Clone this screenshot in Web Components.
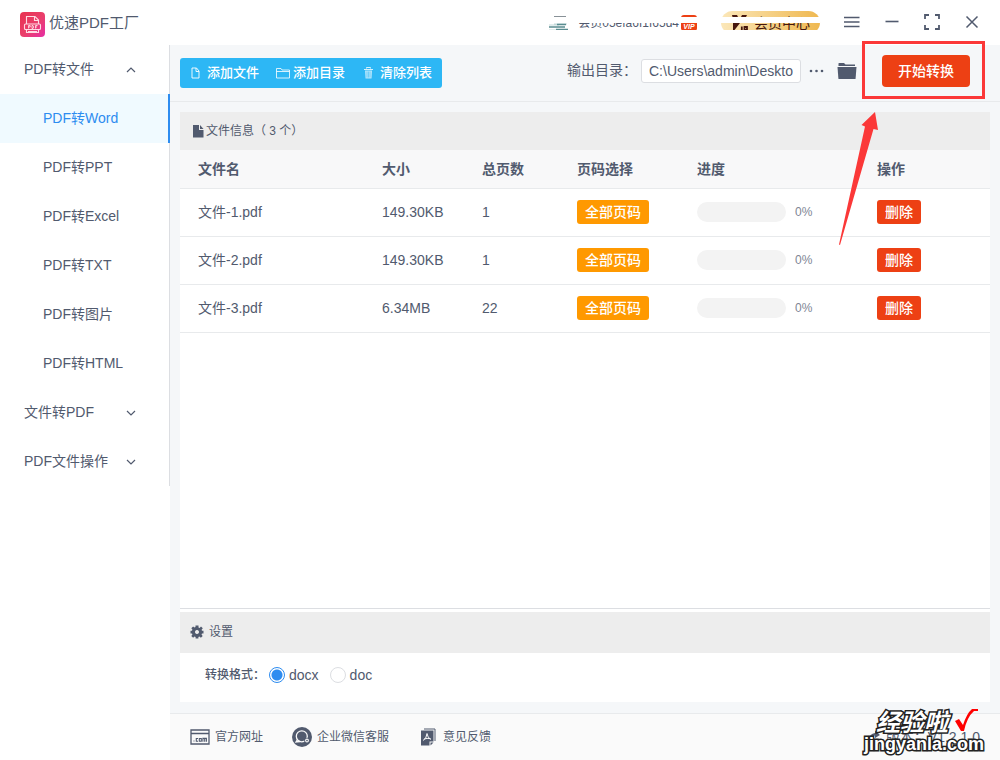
<!DOCTYPE html>
<html lang="zh-CN">
<head>
<meta charset="utf-8">
<title>优速PDF工厂</title>
<style>
  body {
    margin: 0;
    font: 14px/20px "Liberation Sans", "Noto Sans CJK SC", sans-serif;
    color: #515a6e;
    background: #fff;
    --line: #e8eaec;
    --blue: #2d8cf0;
    --red: #ed4014;
    --canvas: #f5f7f9;
  }
</style>
</head>
<body>
<pdf-app></pdf-app>

<script>
const define = (name, html, setup) => {
  const template = document.createElement('template');
  template.innerHTML = `<style>
    *, *::before, *::after { box-sizing: border-box; }
    :host { display: block; box-sizing: border-box; }
    button, input { font: inherit; color: inherit; margin: 0; }
    button { border: 0; background: none; padding: 0; cursor: pointer; white-space: nowrap; }
    a { color: inherit; text-decoration: none; }
  </style>` + html;
  customElements.define(name, class extends HTMLElement {
    constructor() {
      super();
      this.attachShadow({ mode: 'open' }).append(template.content.cloneNode(true));
    }
    connectedCallback() { if (setup) setup(this, this.shadowRoot); }
  });
};

const ICONS = {
  logo: ['0 0 25 25', `<defs><linearGradient id="g" x1="0" y1="0" x2="1" y2="1"><stop offset="0" stop-color="#e8324f"/><stop offset=".55" stop-color="#ea3f6c"/><stop offset="1" stop-color="#e62ea6"/></linearGradient></defs>
    <rect width="25" height="25" rx="4" fill="url(#g)"/>
    <g fill="none" stroke="#ffdbe4" stroke-width="1.1"><path d="M6.500 12V4.500H15l3.500 3.500v4M14.500 4.500V8.500h4"/><rect x="4.500" y="12" width="16" height="5.500" rx="1"/><path d="M6.500 17.500v3h12v-3M8 19.500h9"/>
    <path stroke-width=".9" d="M8.500 16.500v-3h1.700v1.500H8.500M12 13.500v3h1q1.200-1.500 0-3zM15.500 16.500v-3h2M15.500 15h1.500"/></g>`],
  menu: ['0 0 16 12', '<path d="M0 1.500h15.500M0 6h15.500M0 10.500h15.500" fill="none" stroke="currentColor" stroke-width="1.400"/>'],
  minimize: ['0 0 14 14', '<path d="M.5 6.500h13" stroke="currentColor" stroke-width="1.600"/>'],
  expand: ['0 0 16 16', '<path d="M1 5V1h4M11 1h4v4M15 11v4h-4M5 15H1v-4" fill="none" stroke="currentColor" stroke-width="1.800"/>'],
  close: ['0 0 14 14', '<path d="M1.500 1.500l11 11M12.500 1.500l-11 11" stroke="currentColor" stroke-width="1.500"/>'],
  up: ['0 0 10 10', '<path d="M1 7l4-4 4 4" fill="none" stroke="currentColor" stroke-width="1.200"/>'],
  down: ['0 0 10 10', '<path d="M1 3l4 4 4-4" fill="none" stroke="currentColor" stroke-width="1.200"/>'],
  page: ['0 0 12 14', '<path d="M2.500 2h4.500l2.500 3v7h-7zM6.500 2v3.500h3" fill="none" stroke="currentColor" opacity=".9"/>'],
  dir: ['0 0 14 14', '<path d="M.5 12V2.500h4.500l1 1.500h7.500v8zM.5 5.500h13" fill="none" stroke="currentColor" opacity=".8"/>'],
  trash: ['0 0 12 14', '<path d="M4 2.500V1.500h4v1M1.500 3.500h9" fill="none" stroke="currentColor" opacity=".8"/><path d="M2.500 4.500h7l-.5 8h-6z" fill="currentColor" opacity=".65"/><path d="M4.500 5.500v6M6 5.500v6M7.500 5.500v6" stroke="#2db7f5" stroke-width=".5"/>'],
  file: ['0 0 12 14', '<path d="M1 1h6v5h4.500v7.500H1z" fill="currentColor"/><path d="M8 1l3.500 4H8z" fill="currentColor"/>'],
  more: ['0 0 16 4', '<circle cx="2" cy="2" r="1.300"/><circle cx="7.500" cy="2" r="1.300"/><circle cx="13" cy="2" r="1.300"/>'],
  folder: ['0 0 20 18', '<path d="M1.500 1.500Q1.500 1 2 1h5l1.500 1.500H18V4H1.500z"/><path d="M.5 5h19l-.9 11.500q-.1.500-.6.500H2q-.5 0-.6-.5z"/>'],
  gear: ['0 0 14 14', '<path fill-rule="evenodd" d="M5.500.5h3v1.900l1.100.5L11 1.500 12.800 3.300l-1.200 1.500.4 1h1.500v2.600H12l-.5 1.100 1.200 1.400-1.800 1.800-1.500-1.100-1 .4v1.500H5.600V12l-1.100-.4-1.400 1.100-1.800-1.800 1.100-1.500L2 8.400H.5V5.700H2l.4-1.100-1.100-1.400L3.100 1.400l1.400 1.100 1-.4zM7 5a2 2 0 1 0 .01 0z"/>'],
  site: ['0 0 20 16', '<path d="M1 1h18v14H1zM1 4.500h18" fill="none" stroke="currentColor" stroke-width="1.300"/><g fill="none" stroke="currentColor" stroke-width="1.100"><path d="M3.500 12h1M8 9.500H6.300v2.700H8M9.300 9.500h2v2.700h-2zM12.900 12.700V9.400h3.500v3.300M14.700 9.500v3.200"/></g>'],
  wechat: ['0 0 20 20', '<circle cx="10" cy="10" r="10"/><g fill="none" stroke="#fafafa" stroke-width="1.300"><circle cx="9.800" cy="9.300" r="5.500"/><path d="M5.500 12.500L4 15l4-.5"/></g><circle cx="15" cy="13.500" r="2.800"/><circle cx="15" cy="13.500" r="1.400" fill="none" stroke="#fafafa" stroke-width="1.100"/>'],
  feedback: ['0 0 16 18', '<path d="M4 1h11v12" fill="none" stroke="currentColor"/><path d="M1 2.500h12.500v11H9.500V17.500H1z"/><path d="M10.500 14.500h3l-3 3z"/><path d="M7 5.500Q7.500 10 11 11.500M7 5.500Q6.500 11 3 12.500M4 11q3-1 6.500-.3" fill="none" stroke="#fafafa" stroke-width="1"/>'],
  version: ['0 0 16 16', '<path d="M3 10q.5-5 6-6V1.500L14 6 9 9V6.500Q5 7 3 10z"/>'],
  avatar: ['0 0 20 18', '<path d="M6 10h13M1 11h10M1 16h10" stroke="#c3d9da" stroke-width="1.200"/><path d="M9 10.500h9M1 13h16M8 15.500h12" stroke="#5a8c90" stroke-width="1.500"/><path d="M6 3h12" fill="none" stroke="#3a4853" stroke-width="1.200"/>'],
  vip: ['0 0 18 18', '<path d="M1 1h5l2 4H2zM11 1h5l-2 4H9zM2 9h7l-7 9z"/><path d="M10.800 19v-6.500M13.500 19v-6h2.500v3h-2.500" fill="none" stroke="currentColor" stroke-width="1.800"/>']
};

define('app-icon', `
  <style>
    :host { display: inline-block; flex: none; width: 14px; height: 14px; }
    svg { display: block; width: 100%; height: 100%; fill: currentColor; }
  </style>
  <svg aria-hidden="true"></svg>`, (host, root) => {
  const [box, shape] = ICONS[host.getAttribute('name')];
  const svg = root.querySelector('svg');
  svg.setAttribute('viewBox', box);
  svg.innerHTML = shape;
});

define('member-bar', `
  <style>
    :host { position: relative; display: flex; align-items: center; height: 45px; }
    .avatar { width: 20px; height: 18px; margin-right: 10px; }
    .name { font-size: 12px; margin-right: 2px; }
    .tag { display: flex; align-items: flex-end; justify-content: center; width: 16px; height: 16px; border-radius: 3px; background: var(--red); color: #fff; font-size: 7px; line-height: 8px; font-weight: 700; font-style: italic; }
    .center { display: flex; align-items: center; justify-content: center; gap: 5px; margin-left: 24px; width: 99px; height: 23px; border-radius: 12px; background: linear-gradient(90deg, #fbe7b9, #efb850); color: #46170e; }
    .center app-icon { width: 18px; height: 18px; }
    .mask { position: absolute; left: 0; right: 0; background: #fff; }
    .middle { top: 17px; height: 6px; }
    .lower { top: 30px; height: 8px; }
    .label { position: absolute; left: 28px; width: 102px; top: 14px; height: 9px; background: #fff; }
  </style>
  <app-icon class="avatar" name="avatar"></app-icon>
  <span class="name">会员05efa6f1f65d4</span>
  <span class="tag">VIP</span>
  <button class="center"><app-icon name="vip"></app-icon>会员中心</button>
  <span class="label"></span><span class="mask middle"></span><span class="mask lower"></span>`);

define('app-header', `
  <style>
    :host { display: flex; align-items: center; height: 45px; padding: 0 20px; background: #fff; }
    .logo { width: 25px; height: 25px; margin: 3px 4px 0 0; }
    h1 { margin: 0; font-size: 15px; font-weight: 400; }
    member-bar { margin-left: auto; }
    nav { display: flex; align-items: center; gap: 24px; margin: 0 0 2px 24px; }
    nav button { display: flex; align-items: center; justify-content: center; width: 16px; height: 16px; }
    .menu { width: 16px; height: 12px; }
    .expand { width: 16px; height: 16px; }
  </style>
  <app-icon class="logo" name="logo"></app-icon><h1>优速PDF工厂</h1>
  <member-bar></member-bar>
  <nav>
    <button aria-label="菜单"><app-icon class="menu" name="menu"></app-icon></button>
    <button aria-label="最小化"><app-icon name="minimize"></app-icon></button>
    <button aria-label="全屏"><app-icon class="expand" name="expand"></app-icon></button>
    <button aria-label="关闭"><app-icon name="close"></app-icon></button>
  </nav>`);

define('menu-group', `
  <style>
    button { display: flex; align-items: center; justify-content: space-between; width: 100%; height: 49px; padding: 0 33px 2px 24px; }
    app-icon { width: 10px; height: 10px; margin-top: 2px; }
  </style>
  <button><span></span></button><slot></slot>`, (host, root) => {
  root.querySelector('span').textContent = host.getAttribute('label');
  const icon = document.createElement('app-icon');
  icon.setAttribute('name', host.hasAttribute('open') ? 'up' : 'down');
  root.querySelector('button').append(icon);
});

define('menu-item', `
  <style>
    a { display: flex; align-items: center; height: 49px; padding: 0 0 2px 43px; }
    :host([active]) { position: relative; margin-right: -1px; background: #f0faff; border-right: 2px solid var(--blue); color: var(--blue); }
  </style>
  <a href="#"><slot></slot></a>`);

define('side-menu', `
  <style>
    :host { width: 170px; flex: none; background: #fff; }
    nav { border-right: 1px solid #dcdee2; }
  </style>
  <nav>
    <menu-group label="PDF转文件" open>
      <menu-item active>PDF转Word</menu-item>
      <menu-item>PDF转PPT</menu-item>
      <menu-item>PDF转Excel</menu-item>
      <menu-item>PDF转TXT</menu-item>
      <menu-item>PDF转图片</menu-item>
      <menu-item>PDF转HTML</menu-item>
    </menu-group>
    <menu-group label="文件转PDF"></menu-group>
    <menu-group label="PDF文件操作"></menu-group>
  </nav>`);

define('start-button', `
  <style>
    :host { position: relative; }
    button { width: 88px; height: 32px; border-radius: 4px; background: var(--red); color: #fff; font-weight: 500; }
    .frame { position: absolute; z-index: 2; inset: -14px -15px -12px -20px; border: 3px solid #fb3838; pointer-events: none; }
    .arrow { position: absolute; z-index: 2; left: -44px; top: 56px; width: 42px; height: 136px; fill: #fb3838; pointer-events: none; }
  </style>
  <button><slot></slot></button>
  <span class="frame"></span>
  <svg class="arrow" viewBox="0 0 42 136" aria-hidden="true"><path d="M37 1L40 19 35.500 18 2 134 1 133.500 27 15.500 23.500 14z"/></svg>`);

define('tool-bar', `
  <style>
    :host { display: flex; align-items: center; height: 57px; padding: 0 30px 4px 10px; border-bottom: 1px solid var(--line); }
    .group { display: flex; height: 30px; margin-top: 4px; padding: 0 10px 0 9px; gap: 17px; border-radius: 3px; background: #2db7f5; color: #fff; font-size: 13px; font-weight: 500; }
    .group button { display: flex; align-items: center; gap: 5px; }
    .group .slim { width: 13px; height: 14px; }
    .group .wide { gap: 3px; }
    label { margin-left: auto; padding-bottom: 2px; }
    input { width: 160px; height: 24px; margin: 0 8px 0 4px; padding: 0 7px; border: 1px solid #dcdee2; border-radius: 3px; background: #fff; outline: 0; }
    .more, .more app-icon { display: block; width: 16px; height: 4px; }
    .folder { margin: 0 25px 0 12px; }
    .folder app-icon { display: block; width: 20px; height: 18px; }
  </style>
  <div class="group">
    <button><app-icon class="slim" name="page"></app-icon>添加文件</button>
    <button class="wide"><app-icon name="dir"></app-icon>添加目录</button>
    <button><app-icon class="slim" name="trash"></app-icon>清除列表</button>
  </div>
  <label for="out">输出目录：</label>
  <input id="out" value="C:\\Users\\admin\\Deskto">
  <button class="more" aria-label="选择目录"><app-icon name="more"></app-icon></button>
  <button class="folder" aria-label="打开目录"><app-icon name="folder"></app-icon></button>
  <start-button>开始转换</start-button>`);

define('panel-box', `
  <style>
    :host { display: flex; flex-direction: column; background: #fff; }
    header { display: flex; align-items: center; height: var(--head, 38px); padding: 0 10px; background: #ededed; font-size: 12px; }
  </style>
  <header><slot name="title"></slot></header><slot></slot>`);

define('file-table', `
  <style>
    table { width: 100%; border-collapse: separate; border-spacing: 0; table-layout: fixed; }
    th, td { height: 48px; padding: 0 0 1px 18px; text-align: left; border-bottom: 1px solid var(--line); }
    th { height: 39px; background: #f8f8f9; }
    .size { width: 100px; } .pages { width: 95px; } .range { width: 120px; } .progress { width: 180px; } .action { width: 131px; }
    button { display: block; height: 24px; padding: 0 8px; border-radius: 3px; color: #fff; font-weight: 500; }
    .all { background: #f90; }
    .del { background: var(--red); }
    .bar { display: flex; align-items: center; gap: 9px; font-size: 12px; color: #808695; }
    .bar i { width: 89px; height: 20px; border-radius: 10px; background: #f3f3f3; }
  </style>
  <table>
    <thead><tr><th>文件名</th><th class="size">大小</th><th class="pages">总页数</th><th class="range">页码选择</th><th class="progress">进度</th><th class="action">操作</th></tr></thead>
    <tbody></tbody>
  </table>`, (host, root) => {
  const files = [['文件-1.pdf', '149.30KB', 1], ['文件-2.pdf', '149.30KB', 1], ['文件-3.pdf', '6.34MB', 22]];
  root.querySelector('tbody').innerHTML = files.map(([name, size, pages]) => `
    <tr><td>${name}</td><td>${size}</td><td>${pages}</td>
    <td><button class="all">全部页码</button></td>
    <td><div class="bar"><i></i>0%</div></td>
    <td><button class="del">删除</button></td></tr>`).join('');
});

define('format-form', `
  <style>
    :host { height: 49px; padding: 0 25px; }
    form { display: flex; align-items: center; height: 44px; }
    b { font-size: 12px; font-weight: 500; margin-right: 4px; }
    label { display: flex; align-items: center; gap: 4px; margin-right: 11px; }
    input { appearance: none; width: 16px; height: 16px; border: 1px solid #dcdee2; border-radius: 50%; background: #fff; }
    input:checked { border-color: var(--blue); background: radial-gradient(circle, var(--blue) 5px, #fff 6px); }
  </style>
  <form><b>转换格式：</b>
    <label><input type="radio" name="format" checked>docx</label>
    <label><input type="radio" name="format">doc</label>
  </form>`);

define('site-watermark', `
  <style>
    :host { position: absolute; z-index: 3; right: 16px; bottom: 6px; width: 124px; pointer-events: none; color: #fff; -webkit-text-stroke: 3px #222; paint-order: stroke fill; }
    .top { display: flex; align-items: center; height: 22px; padding-left: 16px; font-size: 24px; line-height: 22px; font-weight: 700; font-style: italic; }
    svg { width: 24px; height: 24px; margin: 0 0 6px 6px; }
    .url { display: block; font-size: 18px; line-height: 20px; font-weight: 700; text-align: right; }
  </style>
  <div class="top">经验啦<svg viewBox="0 0 24 24" aria-hidden="true"><path d="M1 13l4-2 4 6Q13 5 18 1h6v2h-4Q13 9 10 23H7z" fill="#f00"/></svg></div>
  <span class="url">jingyanla.com</span>`);

define('app-footer', `
  <style>
    :host { position: relative; display: flex; align-items: center; gap: 29px; height: 47px; padding: 0 20px; border-top: 1px solid var(--line); background: #fafafa; font-size: 12px; }
    a { display: flex; align-items: center; gap: 5px; }
    .site { width: 20px; height: 16px; }
    .wechat { width: 20px; height: 20px; }
    .feedback { width: 20px; height: 18px; }
    .version { display: flex; align-items: center; gap: 4px; margin-left: auto; font-size: 14px; }
    .version app-icon { width: 16px; height: 16px; }
  </style>
  <a href="#"><app-icon class="site" name="site"></app-icon>官方网址</a>
  <a href="#"><app-icon class="wechat" name="wechat"></app-icon>企业微信客服</a>
  <a href="#"><app-icon class="feedback" name="feedback"></app-icon>意见反馈</a>
  <span class="version"><app-icon name="version"></app-icon>版本：V1.2.1.0</span>
  <site-watermark></site-watermark>`);

define('pdf-app', `
  <style>
    :host { display: flex; flex-direction: column; min-height: 100vh; }
    .body { display: flex; flex: 1; }
    main { display: flex; flex-direction: column; flex: 1; min-width: 0; background: var(--canvas); }
    .content { display: flex; flex-direction: column; flex: 1; padding: 10px 10px 11px; }
    .files { flex: 1; border-bottom: 1px solid #dcdee2; }
    .settings { --head: 41px; border-top: 3px solid #fff; }
    .title { display: flex; align-items: center; padding-bottom: 1px; }
    .doc { width: 12px; height: 14px; margin: 0 2px 0 2px; }
    .gear { margin-right: 5px; }
  </style>
  <app-header></app-header>
  <div class="body">
    <side-menu></side-menu>
    <main>
      <tool-bar></tool-bar>
      <div class="content">
        <panel-box class="files">
          <span slot="title" class="title"><app-icon class="doc" name="file"></app-icon>文件信息（ 3 个）</span>
          <file-table></file-table>
        </panel-box>
        <panel-box class="settings">
          <span slot="title" class="title"><app-icon class="gear" name="gear"></app-icon>设置</span>
          <format-form></format-form>
        </panel-box>
      </div>
      <app-footer></app-footer>
    </main>
  </div>`);
</script>
</body>
</html>
